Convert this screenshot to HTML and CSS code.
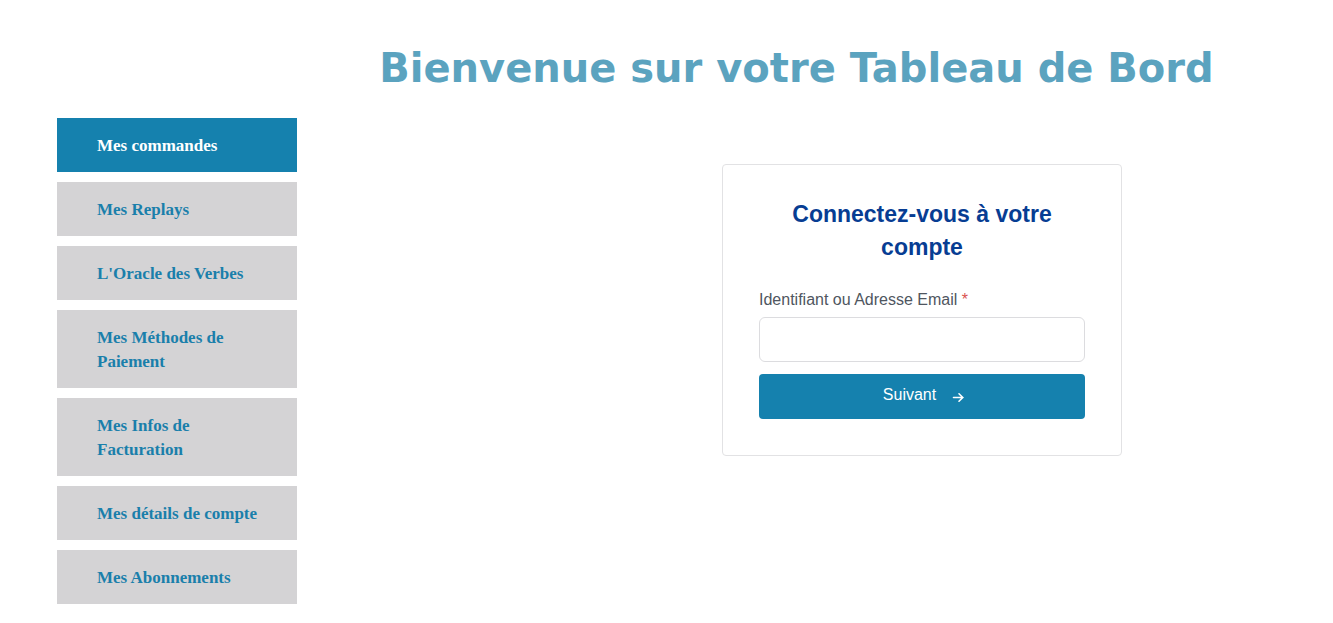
FILE: index.html
```html
<!DOCTYPE html>
<html lang="fr">
<head>
<meta charset="utf-8">
<title>Tableau de Bord</title>
<link rel="stylesheet" href="styles.css">
</head>
<body>
<header class="page-header">
  <h1 class="page-title">Bienvenue sur votre Tableau de Bord</h1>
</header>
<div class="layout">
  <nav class="sidebar">
    <a class="nav-item active" href="#">Mes commandes</a>
    <a class="nav-item" href="#">Mes Replays</a>
    <a class="nav-item" href="#">L'Oracle des Verbes</a>
    <a class="nav-item" href="#">Mes Méthodes de Paiement</a>
    <a class="nav-item" href="#">Mes Infos de Facturation</a>
    <a class="nav-item" href="#">Mes détails de compte</a>
    <a class="nav-item" href="#">Mes Abonnements</a>
  </nav>
  <main class="content">
    <section class="login-card">
      <h2 class="login-title">Connectez-vous à votre compte</h2>
      <label class="field-label" for="user">Identifiant ou Adresse Email <span class="req">*</span></label>
      <input class="field-input" id="user" type="text">
      <button class="btn-next" type="button">Suivant
        <svg class="arrow" width="13" height="13" viewBox="0 0 13 13" aria-hidden="true"><path d="M1.5 6.5h9.5M7 2.8l3.8 3.7L7 10.2" fill="none" stroke="#fff" stroke-width="1.6" stroke-linecap="round" stroke-linejoin="round"/></svg>
      </button>
    </section>
  </main>
</div>
</body>
</html>
```
FILE: styles.css
```css
html, body {
  margin: 0;
  padding: 0;
  background: #ffffff;
}
body {
  font-family: "Liberation Sans", Arial, sans-serif;
}
.page-header {
  padding: 44px 0 0 260px;
}
.page-title {
  margin: 0;
  text-align: center;
  font-family: "DejaVu Sans", sans-serif;
  font-weight: bold;
  font-size: 40px;
  line-height: 48px;
  color: #5ba3bf;
}
.layout {
  display: flex;
  align-items: flex-start;
  padding: 26px 0 0 57px;
}
.sidebar {
  width: 240px;
  display: flex;
  flex-direction: column;
  gap: 10px;
}
.nav-item {
  display: block;
  background: #d4d3d5;
  color: #1a7fab;
  text-decoration: none;
  font-family: "Liberation Serif", "Times New Roman", serif;
  font-weight: bold;
  font-size: 17px;
  line-height: 24px;
  padding: 16px 22px 14px 40px;
}
.nav-item.active {
  background: #1581ae;
  color: #ffffff;
}
.content {
  flex: 1;
  padding: 46px 0 0 425px;
}
.login-card {
  width: 400px;
  box-sizing: border-box;
  border: 1px solid #e2e2e4;
  border-radius: 4px;
  padding: 33px 36px 36px;
  display: flex;
  flex-direction: column;
}
.login-title {
  margin: 0 0 26px;
  text-align: center;
  font-size: 23px;
  line-height: 33px;
  font-weight: bold;
  color: #073d93;
  padding: 0 20px;
}
.field-label {
  font-size: 16px;
  line-height: 20px;
  color: #4f5660;
  margin-bottom: 7px;
}
.req {
  color: #d9534f;
}
.field-input {
  height: 45px;
  box-sizing: border-box;
  border: 1px solid #dcdcdf;
  border-radius: 6px;
  margin: 0 0 12px;
  font-size: 16px;
}
.btn-next {
  height: 45px;
  border: none;
  border-radius: 4px;
  background: #1581ae;
  color: #ffffff;
  font-family: "Liberation Sans", Arial, sans-serif;
  font-size: 16px;
  display: flex;
  align-items: center;
  justify-content: center;
  gap: 16px;
  padding: 0 0 3px 4px;
  cursor: pointer;
}
.arrow {
  display: block;
  margin-top: 4px;
}
```
